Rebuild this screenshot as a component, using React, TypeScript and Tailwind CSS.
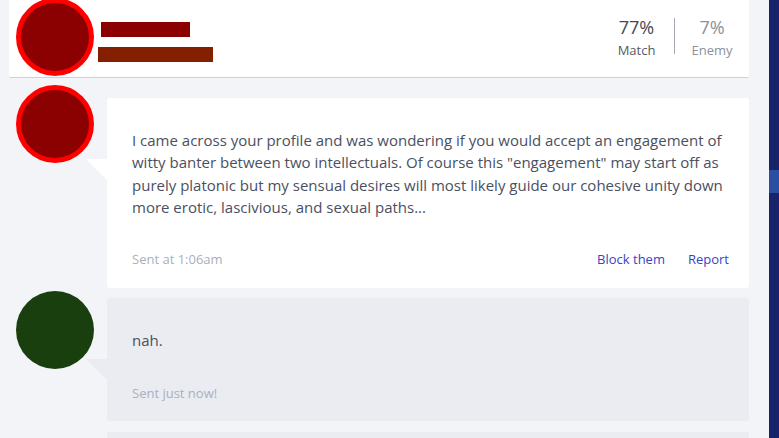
import React from "react";

function Tail({ color }: { color: string }) {
  return (
    <svg className="absolute left-[-21px] top-[61px]" width="21" height="21" viewBox="0 0 21 21">
      <polygon points="0,0 21,0 21,21" fill={color} />
    </svg>
  );
}

export default function App() {
  return (
    <div
      className="w-[779px] h-[438px] overflow-hidden bg-[#f3f4f8] flex"
      style={{ fontFamily: '"Open Sans", "Liberation Sans", sans-serif' }}
    >
      <div className="flex-1 flex flex-col">
        {/* Header */}
        <div className="ml-[9px] mr-[20px] h-[78px] bg-white border-b border-[#cdd1d8] rounded-b-[2px] flex items-start shrink-0">
          <div className="ml-[7px] mt-[-2px] w-[78px] h-[78px] rounded-full bg-[#8b0000] border-[5px] border-[#ff0000] shrink-0" />
          <div className="flex flex-col">
            <div className="ml-[7px] mt-[22px] w-[89px] h-[15px] bg-[#8b0000]" />
            <div className="ml-[4px] mt-[10px] w-[115px] h-[15px] bg-[#841f00]" />
          </div>
          <div className="ml-auto flex mt-[18px]">
            <div className="w-[76px] h-[36px] border-r border-[#a3a8b3] flex flex-col items-center">
              <div className="text-[18px] leading-[18px] font-medium text-[#454955]">77%</div>
              <div className="text-[13px] leading-[18px] mt-[5px] text-[#555a66]">Match</div>
            </div>
            <div className="w-[74px] h-[36px] flex flex-col items-center">
              <div className="text-[18px] leading-[18px] font-medium text-[#8c919b]">7%</div>
              <div className="text-[13px] leading-[18px] mt-[5px] text-[#8c919b]">Enemy</div>
            </div>
          </div>
        </div>

        {/* Message 1 */}
        <div className="flex items-start mt-[20px] mr-[20px]">
          <div className="ml-[16px] mt-[-13px] w-[78px] h-[78px] rounded-full bg-[#8b0000] border-[5px] border-[#ff0000] shrink-0" />
          <div className="relative ml-[13px] flex-1 bg-white rounded-[3px] pl-[25px] pr-[20px] pt-[31px] pb-[19px]">
            <Tail color="#ffffff" />
            <p className="text-[15px] leading-[22.3px] text-[#4a5062]">
              I came across your profile and was wondering if you would accept an engagement of witty banter between two intellectuals. Of course this "engagement" may start off as purely platonic but my sensual desires will most likely guide our cohesive unity down more erotic, lascivious, and sexual paths...
            </p>
            <div className="mt-[31px] flex items-center text-[13px] leading-[20px]">
              <span className="text-[#a9b0bd]">Sent at 1:06am</span>
              <span className="ml-auto text-[#3a42c4]">Block them</span>
              <span className="ml-[23px] text-[#3a42c4]">Report</span>
            </div>
          </div>
        </div>

        {/* Message 2 */}
        <div className="flex items-start mt-[10px] mr-[20px]">
          <div className="ml-[16px] mt-[-7px] w-[78px] h-[78px] rounded-full bg-[#1a3f0f] shrink-0" />
          <div className="relative ml-[13px] flex-1 bg-[#ebecf1] rounded-[3px] pl-[25px] pr-[20px] pt-[31px] pb-[18px]">
            <Tail color="#ebecf1" />
            <p className="text-[15px] leading-[22px] text-[#4a5062]">nah.</p>
            <div className="mt-[32px] text-[13px] leading-[20px] text-[#a9b0bd]">Sent just now!</div>
          </div>
        </div>

        {/* Message 3 (partial) */}
        <div className="flex items-start mt-[11px] mr-[20px]">
          <div className="ml-[107px] flex-1 h-[40px] bg-[#ebecf1] rounded-[3px]" />
        </div>
      </div>

      {/* Right navy bar */}
      <div className="w-[10px] h-full bg-[#18246a] flex flex-col shrink-0">
        <div className="mt-[170px] h-[23px] bg-[#2a4ea2]" />
      </div>
    </div>
  );
}
